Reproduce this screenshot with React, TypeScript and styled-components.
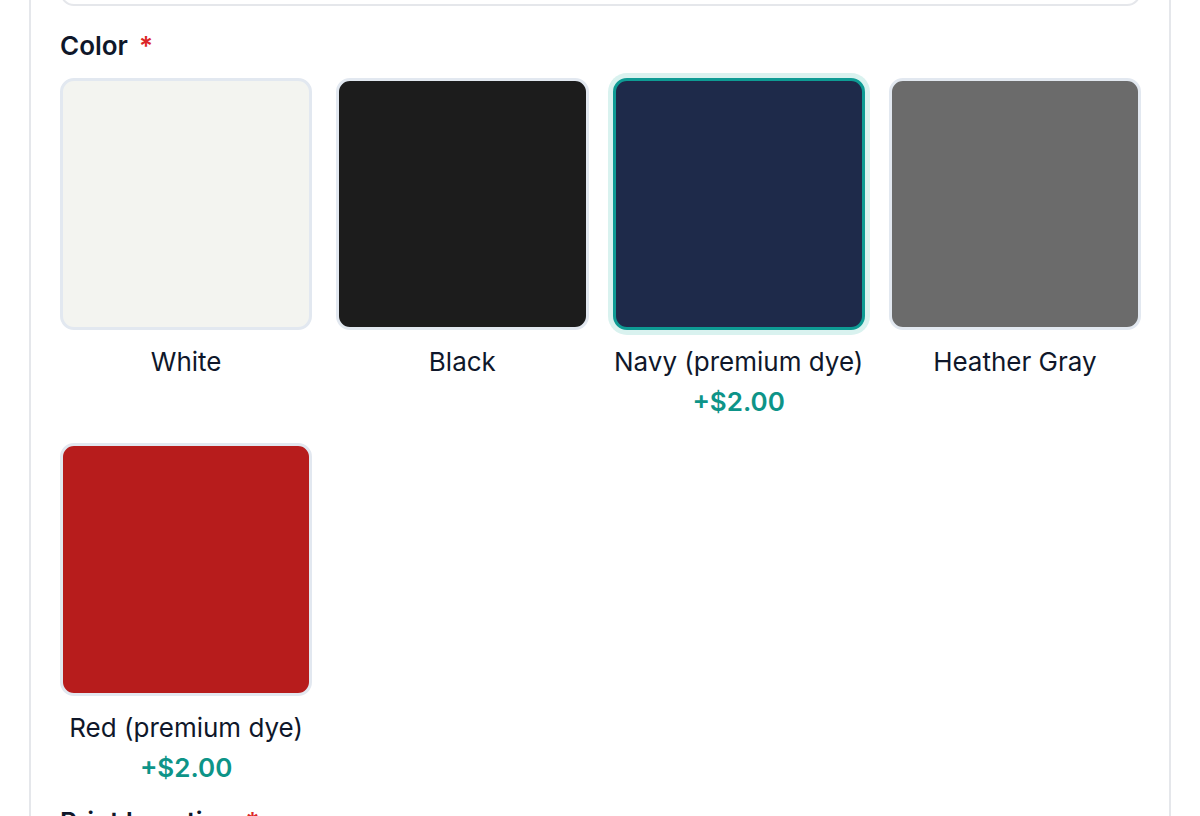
import React from "react";
import styled, { createGlobalStyle } from "styled-components";

const Global = createGlobalStyle`
  html, body { margin: 0; padding: 0; background: #ffffff; overflow: hidden; }
  body { font-family: Inter, "Noto Sans", "Liberation Sans", sans-serif; color: #0f172a; }
`;

const Page = styled.div`
  padding: 0 29px;
  height: 816px;
  overflow: hidden;
`;

const Card = styled.div`
  border-left: 2px solid #e5e7eb;
  border-right: 2px solid #e5e7eb;
  padding: 0 28px 0 29px;
  margin-top: -40px;
  display: flex;
  flex-direction: column;
  gap: 15px;
`;

const Field = styled.div`
  display: flex;
  flex-direction: column;
`;

const InputBox = styled.div`
  height: 42px;
  border: 2px solid #e5e7eb;
  border-radius: 14px;
  margin-bottom: 5px;
`;

const Label = styled.div`
  font-size: 26px;
  line-height: 39px;
  font-weight: 600;
  color: #0f172a;
  margin-bottom: 13px;
`;

const Required = styled.span`
  color: #dc2626;
  margin-left: 11px;
`;

const Grid = styled.div`
  display: grid;
  grid-template-columns: repeat(4, 1fr);
  column-gap: 24px;
  row-gap: 22px;
`;

const Option = styled.div`
  display: flex;
  flex-direction: column;
  align-items: center;
`;

const Swatch = styled.div<{ $color: string; $selected?: boolean }>`
  width: 100%;
  aspect-ratio: 1 / 1;
  box-sizing: border-box;
  border-radius: 14px;
  background: ${(p) => p.$color};
  border: 3px solid ${(p) => (p.$selected ? "#0e9b94" : "#e2e8f0")};
  box-shadow: ${(p) => (p.$selected ? "0 0 0 5px #d9f2ef" : "none")};
`;

const Name = styled.div`
  margin-top: 12px;
  font-size: 26px;
  line-height: 39px;
  color: #0f172a;
  text-align: center;
`;

const Price = styled.div`
  margin-top: 1px;
  font-size: 26px;
  line-height: 39px;
  font-weight: 600;
  color: #0d9488;
`;

const colors = [
  { name: "White", color: "#f3f4f0" },
  { name: "Black", color: "#1c1c1c" },
  { name: "Navy (premium dye)", color: "#1e2a4a", price: "+$2.00", selected: true },
  { name: "Heather Gray", color: "#6b6b6b" },
  { name: "Red (premium dye)", color: "#b71c1c", price: "+$2.00" },
];

export default function App() {
  return (
    <>
      <Global />
      <Page>
        <Card>
          <InputBox />
          <Field>
            <Label>
              Color<Required>*</Required>
            </Label>
            <Grid>
              {colors.map((c) => (
                <Option key={c.name}>
                  <Swatch $color={c.color} $selected={c.selected} />
                  <Name>{c.name}</Name>
                  {c.price && <Price>{c.price}</Price>}
                </Option>
              ))}
            </Grid>
          </Field>
          <Field>
            <Label>
              Print Location<Required>*</Required>
            </Label>
          </Field>
        </Card>
      </Page>
    </>
  );
}
